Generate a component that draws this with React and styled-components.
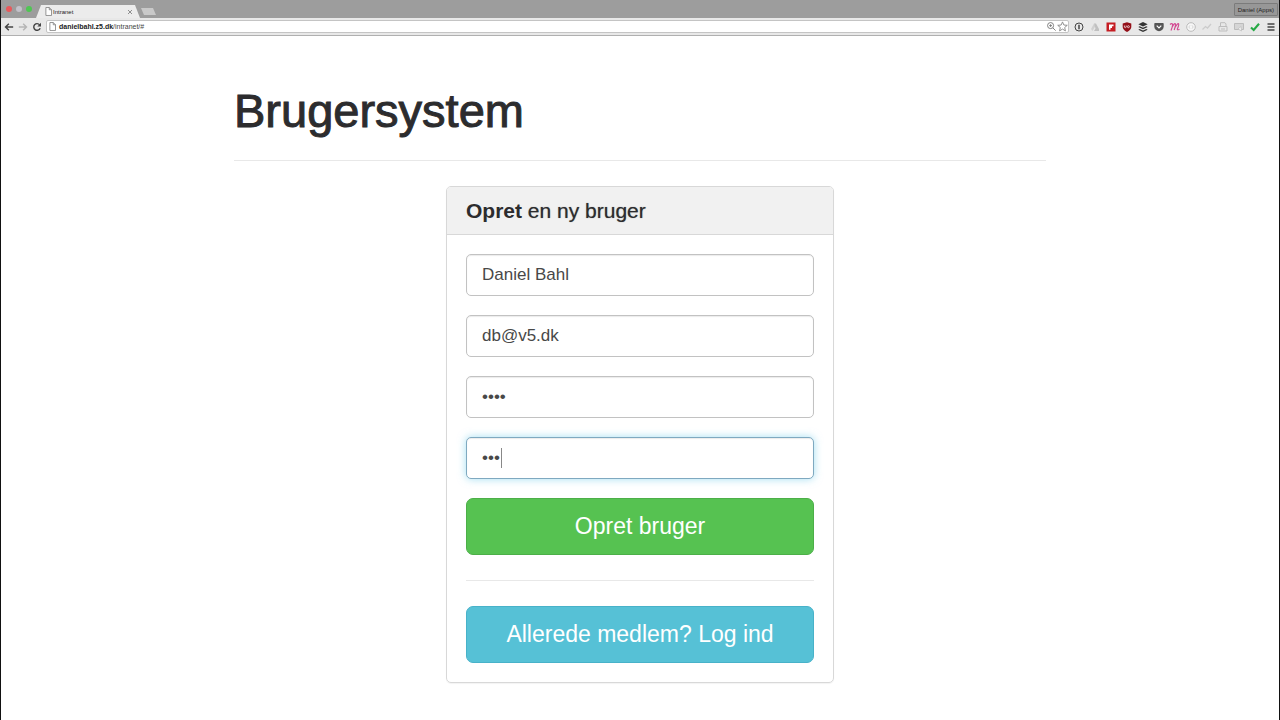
import React from "react";

import styled, { createGlobalStyle, css } from "styled-components";

const GlobalStyle = createGlobalStyle`
  * {
    box-sizing: border-box;
  }

  body {
    margin: 0;
    background: #fff;
    color: #2c2c2e;
    font-family: "Liberation Sans", Arial, sans-serif;
  }
`;

const Window = styled.div`
  display: flex;
  flex-direction: column;
  min-height: 100vh;
  border: solid #111;
  border-width: 0 1px;
`;

const TabStrip = styled.div`
  display: flex;
  align-items: flex-end;
  height: 18px;
  padding-left: 5px;
  background: #9d9d9d;
`;

const Lights = styled.div`
  display: flex;
  gap: 4px;
  align-self: center;
`;

const Light = styled.span`
  width: 6px;
  height: 6px;
  border-radius: 50%;
  background: ${({ $color }) => $color};
`;

const Tab = styled.div`
  display: flex;
  align-items: center;
  width: 104px;
  height: 13px;
  margin-left: 4px;
  padding: 0 7px 0 8px;
  background: #ececec;
  clip-path: polygon(5px 0, 99px 0, 100% 100%, 0 100%);
  font-size: 6px;
  color: #222;
`;

const TabTitle = styled.span`
  flex: 1;
`;

const CloseTab = styled.button`
  display: flex;
  padding: 0;
  border: 0;
  background: none;
`;

const NewTab = styled.button`
  width: 15px;
  height: 7px;
  margin: 0 0 3px 1px;
  padding: 0;
  border: 0;
  background: #c9c9c9;
  clip-path: polygon(0 0, 12px 0, 100% 100%, 3px 100%);
`;

const Profile = styled.button`
  height: 13px;
  margin: 0 1px 2px auto;
  padding: 0 3px;
  border: 1px solid #7b7b7b;
  border-radius: 1px;
  background: #979797;
  color: #222;
  font-family: inherit;
  font-size: 6px;
  line-height: 10px;
`;

const Toolbar = styled.div`
  display: flex;
  align-items: center;
  gap: 4px;
  height: 18px;
  padding: 0 2px 0 3px;
  background: #e8e8e8;
  border-bottom: 1px solid #b0b0b0;
`;

const IconButton = styled.button`
  display: flex;
  flex: none;
  padding: 0;
  border: 0;
  background: none;
`;

const Navigation = styled.div`
  display: flex;
  gap: 4px;
`;

const AddressBar = styled.div`
  display: flex;
  flex: 1;
  align-items: center;
  height: 13px;
  padding-left: 1px;
  background: #fff;
  border: 1px solid #c4c4c4;
  border-radius: 2px;
`;

const Address = styled.div`
  flex: 1;
  margin-left: 2px;
  font-size: 7px;
  line-height: 11px;
  color: #444;

  b {
    color: #222;
  }
`;

const Extensions = styled.div`
  display: flex;
  gap: 4px;
`;

const Main = styled.main`
  width: 100%;
  max-width: 812px;
  margin: 0 auto;
  padding: 51px 0 37px;
`;

const Title = styled.h1`
  margin: 0;
  font-size: 47px;
  font-weight: 400;
  line-height: 48px;
  -webkit-text-stroke: 1px #2c2c2e;
`;

const Divider = styled.hr`
  height: 1px;
  margin: 25px 0;
  border: 0;
  background: #e8e8e8;
`;

const Panel = styled.section`
  width: 100%;
  max-width: 388px;
  margin: 0 auto;
  border: 1px solid #d8d8d8;
  border-radius: 5px;
  box-shadow: 0 1px 1px rgba(0, 0, 0, 0.05);
`;

const PanelTitle = styled.h2`
  margin: 0;
  padding: 12px 19px;
  border-bottom: 1px solid #d8d8d8;
  border-radius: 4px 4px 0 0;
  background: #f1f1f1;
  font-size: 21px;
  font-weight: 400;
  line-height: 23px;
  text-shadow: 0 0 1px rgba(44, 44, 46, 0.6);

  strong {
    text-shadow: none;
  }
`;

const Form = styled.form`
  padding: 19px;
`;

const Field = styled.label`
  display: block;
  position: relative;
  margin-bottom: 19px;
`;

const Input = styled.input`
  display: block;
  width: 100%;
  height: 42px;
  padding: 0 15px;
  border: 1px solid #c2c2c2;
  border-radius: 5px;
  outline: 0;
  background: #fff;
  box-shadow: inset 0 1px 1px rgba(0, 0, 0, 0.08);
  color: #484848;
  font-family: inherit;
  font-size: 17px;
  caret-color: transparent;

  ${({ $active }) =>
    $active &&
    css`
      border-color: #7fa9c0;
      box-shadow: inset 0 1px 1px rgba(0, 0, 0, 0.08),
        0 0 9px rgba(102, 200, 233, 0.6);
    `}
`;

const Caret = styled.span`
  position: absolute;
  top: 11px;
  left: 35px;
  width: 1px;
  height: 20px;
  background: #888;
`;

const Button = styled.button`
  display: block;
  width: 100%;
  height: 57px;
  border: 1px solid ${({ $border }) => $border};
  border-radius: 7px;
  background: ${({ $color }) => $color};
  color: #fff;
  font-family: inherit;
  font-size: 23px;
`;

const Icon = ({ children, ...props }) => (
  <svg
    width="12"
    height="12"
    viewBox="0 0 12 12"
    fill="none"
    stroke="#444"
    aria-hidden="true"
    {...props}
  >
    {children}
  </svg>
);

const PageIcon = () => (
  <Icon width="9" height="9" stroke="#777">
    <path d="M2.5 .7H7L10 3.7V11.3H2.5ZM7 .7V3.7H10" fill="#fff" />
  </Icon>
);

const navigation = [
  {
    name: "Back",
    icon: <path d="M11 6H2M5.8 2 1.8 6 5.8 10" strokeWidth="1.7" />,
  },
  {
    name: "Forward",
    icon: (
      <path d="M1 6H10M6.2 2 10.2 6 6.2 10" stroke="#b5b5b5" strokeWidth="1.7" />
    ),
  },
  {
    name: "Reload",
    icon: (
      <>
        <path d="M9.2 3.4A4 4 0 1 0 9.8 7.5" strokeWidth="1.7" />
        <path d="M10.8 1V5.4H6.4Z" fill="#444" stroke="none" />
      </>
    ),
  },
];

const extensions = [
  {
    name: "1Password",
    icon: (
      <>
        <circle cx="6" cy="6" r="4" />
        <path d="M6 3.7V8.3" strokeWidth="1.5" />
      </>
    ),
  },
  {
    name: "Drive",
    icon: (
      <>
        <path d="M5 2.5 2 8 3.5 10 6.5 5Z" fill="#d0d0d0" stroke="none" />
        <path d="M5 2.5H7L10 8V10H5L6.5 7.5Z" fill="#c0c0c0" stroke="none" />
      </>
    ),
  },
  {
    name: "Flipboard",
    icon: (
      <>
        <path d="M1.5 1.5H10.5V10.5H1.5Z" fill="#c51d23" stroke="none" />
        <path d="M4 3.5H8.5V5.3H7V7H5.5V8.8H4Z" fill="#fff" stroke="none" />
      </>
    ),
  },
  {
    name: "uBlock",
    icon: (
      <>
        <path
          d="M6 1.2 10.3 2.5V6Q10 9 6 11 2 9 1.7 6V2.5Z"
          fill="#930f18"
          stroke="none"
        />
        <path d="M3.4 4.5V6.2Q4.3 7.2 5.2 6.2V4.5" stroke="#fff" strokeWidth=".7" />
        <circle cx="7.4" cy="5.7" r="1" stroke="#fff" strokeWidth=".7" />
      </>
    ),
  },
  {
    name: "Buffer",
    icon: (
      <g fill="#333" stroke="none">
        <path d="M6 1 10.7 3.2 6 5.4 1.3 3.2Z" />
        <path d="M1.3 6 2.7 5.3 6 6.8 9.3 5.3 10.7 6 6 8.2Z" />
        <path d="M1.3 8.8 2.7 8.1 6 9.6 9.3 8.1 10.7 8.8 6 11Z" />
      </g>
    ),
  },
  {
    name: "Pocket",
    icon: (
      <>
        <path
          d="M1.3 2.8Q1.3 2 2.1 2H9.9Q10.7 2 10.7 2.8V5.5A4.7 4.7 0 0 1 1.3 5.5Z"
          fill="#555"
          stroke="none"
        />
        <path d="M3.7 4.7 6 7 8.3 4.7" stroke="#fff" strokeWidth="1.2" />
      </>
    ),
  },
  {
    name: "Mention",
    icon: (
      <path
        d="M1 3.5Q2.5 2 3.5 3 4 4 2 9.5M3 6.5Q5 2 6.3 2.7 7 3.5 5.2 9M6 6.5Q8.5 2 9.5 2.7 10.3 3.5 8.4 7.8 8 9.5 10.5 8.2"
        stroke="#d34992"
        strokeWidth="1.2"
      />
    ),
  },
  {
    name: "Code",
    icon: (
      <>
        <circle cx="6" cy="6" r="4.3" fill="#f7f7f7" stroke="#bbb" />
        <path d="M5 4.3 3.8 6 5 7.7M7 4.3 8.2 6 7 7.7" stroke="#ccc" strokeWidth=".8" />
      </>
    ),
  },
  {
    name: "Analytics",
    icon: <path d="M1.5 8.5 4.5 5.5 6.5 7 10 3" stroke="#ccc" strokeWidth="1.3" />,
  },
  {
    name: "Print",
    icon: (
      <path d="M3.5 5.5V1.7H8L9 3V5.5M2 5.5H10V10H2ZM4 8H8" stroke="#bdbdbd" />
    ),
  },
  {
    name: "Cast",
    icon: (
      <>
        <path d="M1.5 2.5H10.5V8.5H1.5Z" fill="#d5d5d5" stroke="#bbb" />
        <path d="M5 8 8 5.5 8.5 10Z" fill="#f5f5f5" stroke="#bbb" strokeWidth=".7" />
      </>
    ),
  },
  {
    name: "Check",
    icon: <path d="M2 6.5 4.7 9 10 2.7" stroke="#25a944" strokeWidth="2.1" />,
  },
  {
    name: "Menu",
    icon: <path d="M2.5 3H9.5M2.5 6H9.5M2.5 9H9.5" strokeWidth="1.6" />,
  },
];

const fields = [
  { name: "navn", label: "Navn", type: "text", value: "Daniel Bahl" },
  { name: "email", label: "E-mail", type: "text", value: "db@v5.dk" },
  { name: "kode", label: "Adgangskode", type: "password", value: "kode" },
  {
    name: "gentag",
    label: "Gentag adgangskode",
    type: "password",
    value: "kod",
    active: true,
  },
];

const Browser = () => (
  <header>
    <TabStrip>
      <Lights>
        <Light $color="#e9585b" />
        <Light $color="#c3c1ca" />
        <Light $color="#4fc653" />
      </Lights>
      <Tab>
        <PageIcon />
        <TabTitle>Intranet</TabTitle>
        <CloseTab type="button" aria-label="Close tab">
          <Icon width="6" height="6" stroke="#777">
            <path d="M2 2 10 10M10 2 2 10" strokeWidth="1.6" />
          </Icon>
        </CloseTab>
      </Tab>
      <NewTab type="button" aria-label="New tab" />
      <Profile type="button">Daniel (Apps)</Profile>
    </TabStrip>
    <Toolbar>
      <Navigation>
        {navigation.map((item) => (
          <IconButton key={item.name} type="button" aria-label={item.name}>
            <Icon width="10" height="10">{item.icon}</Icon>
          </IconButton>
        ))}
      </Navigation>
      <AddressBar>
        <PageIcon />
        <Address>
          <b>danielbahl.z5.dk</b>/intranet/#
        </Address>
        <IconButton type="button" aria-label="Zoom">
          <Icon width="11" height="11" stroke="#777">
            <circle cx="5" cy="5" r="3.3" />
            <path d="M7.5 7.5 10.5 10.5M3.5 5H6.5M5 3.5V6.5" />
          </Icon>
        </IconButton>
        <IconButton type="button" aria-label="Bookmark">
          <Icon width="11" height="11" stroke="#888">
            <path d="M6 1 7.5 4.4 11.2 4.7 8.4 7.1 9.2 10.8 6 8.8 2.8 10.8 3.6 7.1 .8 4.7 4.5 4.4Z" />
          </Icon>
        </IconButton>
      </AddressBar>
      <Extensions>
        {extensions.map((item) => (
          <IconButton key={item.name} type="button" aria-label={item.name}>
            <Icon>{item.icon}</Icon>
          </IconButton>
        ))}
      </Extensions>
    </Toolbar>
  </header>
);

const App = () => {
  return (
    <Window>
      <GlobalStyle />
      <Browser />
      <Main>
        <Title>Brugersystem</Title>
        <Divider />
        <Panel>
          <PanelTitle>
            <strong>Opret</strong> en ny bruger
          </PanelTitle>
          <Form onSubmit={(e) => e.preventDefault()}>
            {fields.map((field) => (
              <Field key={field.name}>
                <Input
                  name={field.name}
                  type={field.type}
                  aria-label={field.label}
                  defaultValue={field.value}
                  autoFocus={field.active}
                  $active={field.active}
                />
                {field.active && <Caret />}
              </Field>
            ))}
            <Button type="submit" $color="#56c251" $border="#4caf48">
              Opret bruger
            </Button>
            <Divider />
            <Button type="button" $color="#56c1d6" $border="#48b2c9">
              Allerede medlem? Log ind
            </Button>
          </Form>
        </Panel>
      </Main>
    </Window>
  );
};

export default App;
